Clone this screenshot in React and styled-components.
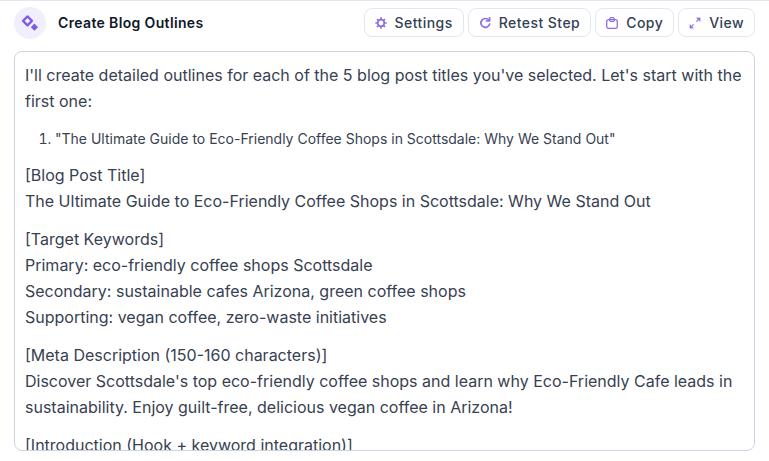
import React from 'react';
import styled, { createGlobalStyle } from 'styled-components';

const GlobalStyle = createGlobalStyle`
  html, body {
    margin: 0;
    padding: 0;
    background: #fff;
    overflow: hidden;
  }
  * {
    box-sizing: border-box;
  }
`;

const Page = styled.div`
  width: 769px;
  height: 461px;
  display: flex;
  flex-direction: column;
  padding: 0 14px 10px;
  border-top: 1px solid #e2e8f0;
  font-family: Inter, "Liberation Sans", sans-serif;
  overflow: hidden;
`;

const Header = styled.header`
  height: 43px;
  margin-bottom: 7px;
  flex: none;
  display: flex;
  align-items: center;
  justify-content: space-between;
`;

const TitleGroup = styled.div`
  display: flex;
  align-items: center;
  gap: 12px;
`;

const Badge = styled.div`
  width: 32px;
  height: 32px;
  border-radius: 50%;
  background: #f1effe;
  color: #7c5ce6;
  display: flex;
  align-items: center;
  justify-content: center;
`;

const Title = styled.h1`
  margin: 0;
  font-size: 14px;
  font-weight: 600;
  letter-spacing: 0.35px;
  color: #0f172a;
`;

const Actions = styled.div`
  display: flex;
  gap: 4px;
`;

const ActionButton = styled.button`
  height: 29px;
  padding: 0 10px;
  display: flex;
  align-items: center;
  gap: 8px;
  background: #fff;
  border: 1px solid #e2e8f0;
  border-radius: 8px;
  color: #334155;
  font-family: inherit;
  font-size: 14px;
  font-weight: 500;
  letter-spacing: 0.45px;
  svg {
    color: #8b6fe8;
    flex: none;
  }
`;

const Panel = styled.section`
  flex: 1;
  min-height: 0;
  overflow: hidden;
  border: 1px solid #cbd5e1;
  border-radius: 8px;
  padding: 10px 10px 0;
  color: #374151;
  font-size: 16px;
  line-height: 26px;
`;

const Paragraph = styled.p`
  margin: 0 0 12px;
`;

const Outline = styled.ol`
  margin: 0 0 10px;
  padding-left: 30px;
  font-size: 14px;
`;

const SparkIcon = () => (
  <svg width="18" height="18" viewBox="0 0 18 18" fill="none">
    <path d="M6.5 2.4 11 6.9 6.5 11.4 2 6.9Z" stroke="currentColor" strokeWidth="2.2" strokeLinejoin="round" />
    <path d="M13.4 9.6 17 13.2 13.4 16.8 9.8 13.2Z" fill="currentColor" />
  </svg>
);

const GearIcon = () => (
  <svg width="12" height="12" viewBox="0 0 12 12" fill="none" stroke="currentColor">
    <circle cx="6" cy="6" r="3.3" strokeWidth="1.8" />
    <path d="M6 .3v2M6 9.7v2M.3 6h2M9.7 6h2M2 2l1.4 1.4M8.6 8.6 10 10M2 10l1.4-1.4M8.6 3.4 10 2" strokeWidth="1.7" />
  </svg>
);

const RetestIcon = () => (
  <svg width="12" height="12" viewBox="0 0 12 12" fill="none" stroke="currentColor" strokeWidth="1.7">
    <path d="M9.8 3.2A4.4 4.4 0 1 0 10.6 7" strokeLinecap="round" />
    <path d="M10.6 .8v3.2H7.4" strokeLinejoin="round" strokeLinecap="round" />
  </svg>
);

const CopyIcon = () => (
  <svg width="12" height="12" viewBox="0 0 12 12" fill="none" stroke="currentColor" strokeWidth="1.3">
    <rect x="0.7" y="2.6" width="10.6" height="8.8" rx="2" />
    <path d="M3.6 3V2.8a2.4 2.4 0 0 1 4.8 0V3c0 2-4.8 2-4.8 0Z" />
  </svg>
);

const ExpandIcon = () => (
  <svg width="12" height="12" viewBox="0 0 12 12" fill="none" stroke="currentColor" strokeWidth="1.2">
    <path d="M4.6 7.4 2.4 9.6M7.4 4.6 9.6 2.4" />
    <path d="M.8 7.4v3.8h3.8Z M7.4.8h3.8v3.8Z" fill="currentColor" strokeWidth="0.3" />
  </svg>
);

const actions = [
  { label: 'Settings', icon: <GearIcon /> },
  { label: 'Retest Step', icon: <RetestIcon /> },
  { label: 'Copy', icon: <CopyIcon /> },
  { label: 'View', icon: <ExpandIcon /> },
];

const App = () => (
  <>
    <GlobalStyle />
    <Page>
      <Header>
        <TitleGroup>
          <Badge>
            <SparkIcon />
          </Badge>
          <Title>Create Blog Outlines</Title>
        </TitleGroup>
        <Actions>
          {actions.map((action) => (
            <ActionButton key={action.label}>
              {action.icon}
              {action.label}
            </ActionButton>
          ))}
        </Actions>
      </Header>
      <Panel>
        <Paragraph>
          I'll create detailed outlines for each of the 5 blog post titles you've selected. Let's start with the first one:
        </Paragraph>
        <Outline>
          <li>"The Ultimate Guide to Eco-Friendly Coffee Shops in Scottsdale: Why We Stand Out"</li>
        </Outline>
        <Paragraph>
          [Blog Post Title]
          <br />
          The Ultimate Guide to Eco-Friendly Coffee Shops in Scottsdale: Why We Stand Out
        </Paragraph>
        <Paragraph>
          [Target Keywords]
          <br />
          Primary: eco-friendly coffee shops Scottsdale
          <br />
          Secondary: sustainable cafes Arizona, green coffee shops
          <br />
          Supporting: vegan coffee, zero-waste initiatives
        </Paragraph>
        <Paragraph>
          [Meta Description (150-160 characters)]
          <br />
          Discover Scottsdale's top eco-friendly coffee shops and learn why Eco-Friendly Cafe leads in sustainability. Enjoy guilt-free, delicious vegan coffee in Arizona!
        </Paragraph>
        <Paragraph>[Introduction (Hook + keyword integration)]</Paragraph>
      </Panel>
    </Page>
  </>
);

export default App;
